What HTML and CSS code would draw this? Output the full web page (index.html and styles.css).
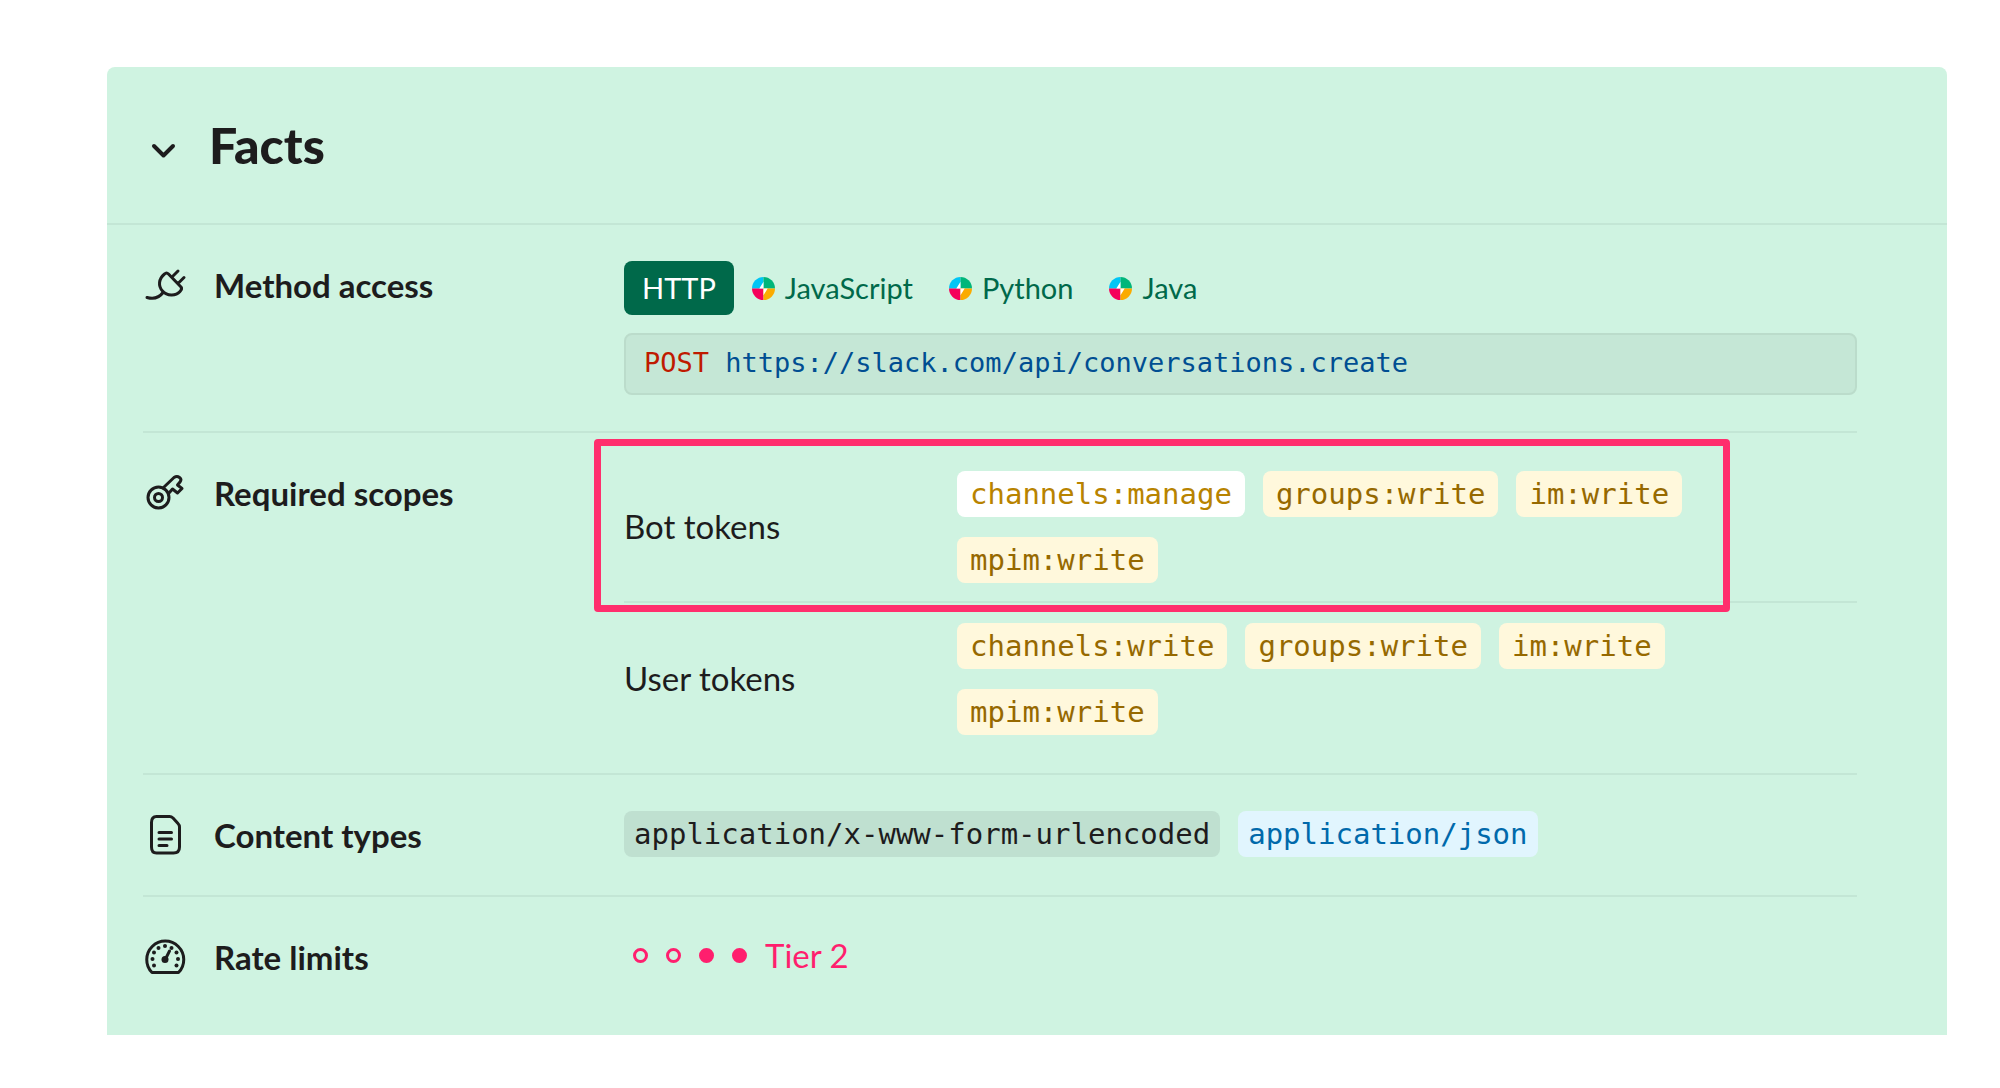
FILE: index.html
```html
<!DOCTYPE html>
<html lang="en">
<head>
<meta charset="utf-8">
<meta name="viewport" content="width=device-width, initial-scale=1">
<title>Facts</title>
<link rel="stylesheet" href="styles.css">
</head>
<body>
<svg class="defs" aria-hidden="true">
  <symbol id="sdk" viewBox="0 0 22 22">
    <path d="M11 11V0A11 11 0 0 0 0 11z" fill="#00c5f5"/>
    <path d="M11 11V0A11 11 0 0 1 22 11z" fill="#00b67a"/>
    <path d="M11 11V22A11 11 0 0 1 0 11z" fill="#f5005a"/>
    <path d="M11 11V22A11 11 0 0 0 22 11z" fill="#fbab00"/>
    <path d="M11 4.500V11H15L11 17.500V11H7z" fill="#fff"/>
  </symbol>
</svg>
<main class="panel">
  <header class="panel-header">
    <button class="toggle" type="button" aria-expanded="true" aria-label="Collapse Facts">
      <svg class="icon" viewBox="0 0 44 44"><path d="M11 17l9.500 9.500L30 17" stroke-width="4"/></svg>
    </button>
    <h1 class="title">Facts</h1>
  </header>
  <div class="facts">
    <section class="fact">
      <h2 class="fact-name">
        <svg class="icon" viewBox="0 0 44 44"><path d="M4 34.500c7 2 12 .5 16-5M25.500 11l12.500 13M29 14l6-6M35 20.500l6-6M25.500 11q-2-2-4 0c-6 5-6.500 12-2 17s13 5.500 17.500.5q2.500-2.500 1-4.500"/></svg>
        Method access
      </h2>
      <div class="fact-body method">
        <div class="tabs">
          <button class="tab tab-active" type="button">HTTP</button>
          <button class="tab" type="button"><svg class="sdk"><use href="#sdk"/></svg>JavaScript</button>
          <button class="tab" type="button"><svg class="sdk"><use href="#sdk"/></svg>Python</button>
          <button class="tab" type="button"><svg class="sdk"><use href="#sdk"/></svg>Java</button>
        </div>
        <code class="endpoint"><span class="verb">POST</span> https://slack.com/api/conversations.create</code>
      </div>
    </section>
    <section class="fact">
      <h2 class="fact-name">
        <svg class="icon" viewBox="0 0 44 44"><circle cx="15.500" cy="26.500" r="10.500"/><circle cx="15.500" cy="26.500" r="4"/><path d="M20 17L31 6.500q3-2 5.500 0t.5 4.500l-2.500 3 4.500 3.500-4.500 4.500-5-4-3.500 4"/></svg>
        Required scopes
      </h2>
      <div class="scopes">
        <div class="scope-row">
          <h3 class="scope-name">Bot tokens</h3>
          <div class="badges">
            <a class="scope scope-hover" href="#channels-manage">channels:manage</a>
            <a class="scope" href="#groups-write">groups:write</a>
            <a class="scope" href="#im-write">im:write</a>
            <a class="scope" href="#mpim-write">mpim:write</a>
          </div>
          <div class="highlight"></div>
        </div>
        <div class="scope-row">
          <h3 class="scope-name">User tokens</h3>
          <div class="badges">
            <a class="scope" href="#channels-write">channels:write</a>
            <a class="scope" href="#groups-write">groups:write</a>
            <a class="scope" href="#im-write">im:write</a>
            <a class="scope" href="#mpim-write">mpim:write</a>
          </div>
        </div>
      </div>
    </section>
    <section class="fact">
      <h2 class="fact-name">
        <svg class="icon" viewBox="0 0 44 44"><path d="M13.500 3.500h13q2 0 3.500 1.500l5 5.500q1.500 1.500 1.500 3.500v20q0 6-6 6h-17q-5 0-5-6v-24.500q0-6 5-6zM16 19.500h12.500M16 26h12.500M16 32.500h8"/></svg>
        Content types
      </h2>
      <div class="fact-body types">
        <code class="type">application/x-www-form-urlencoded</code>
        <a class="type type-link" href="#json">application/json</a>
      </div>
    </section>
    <section class="fact">
      <h2 class="fact-name">
        <svg class="icon" viewBox="0 0 44 44"><g transform="translate(0 1)"><path d="M9 36.500a18.500 18.500 0 1 1 26.500 0z"/><g class="solid"><circle cx="11" cy="29.500" r="2"/><circle cx="9.500" cy="23" r="2"/><circle cx="11" cy="16.500" r="2"/><circle cx="15.500" cy="12" r="2"/><circle cx="22" cy="10" r="2"/><circle cx="28.500" cy="12" r="2"/><circle cx="33.500" cy="16.500" r="2"/><circle cx="35" cy="23" r="2"/><circle cx="33.500" cy="29.500" r="2"/><circle cx="22" cy="23.500" r="3.500"/></g><path d="M22.500 23l4-8"/></g></svg>
        Rate limits
      </h2>
      <div class="fact-body">
        <a class="tier" href="#tier-2">
          <span class="dot"></span><span class="dot"></span><span class="dot dot-on"></span><span class="dot dot-on"></span>
          <span>Tier 2</span>
        </a>
      </div>
    </section>
  </div>
</main>
</body>
</html>
```
FILE: styles.css
```css
* { box-sizing: border-box; }

body {
  margin: 0;
  padding: 67px 53px 53px 107px;
  background: #fff;
  color: #1d1c1d;
  font-family: Lato, "Liberation Sans", sans-serif;
  font-size: 33px;
}

h1, h2, h3 { margin: 0; }
a { text-decoration: none; }
button { border: 0; background: none; font: inherit; color: inherit; }

.defs { display: none; }

.panel {
  background: #cff3e1;
  border-radius: 8px 8px 0 0;
  padding-bottom: 56px;
}

.panel-header {
  display: flex;
  align-items: center;
  height: 158px;
  padding: 0 36px;
  border-bottom: 2px solid #c3e6d5;
}

.toggle {
  display: flex;
  padding: 12px 0 0;
  margin-right: 22px;
}

.title {
  font-size: 50px;
  line-height: 60px;
  font-weight: 900;
}

.icon {
  flex: none;
  width: 44px;
  height: 44px;
  overflow: visible;
  fill: none;
  stroke: #1d1c1d;
  stroke-width: 3;
  stroke-linecap: round;
  stroke-linejoin: round;
}

.solid {
  fill: #1d1c1d;
  stroke: none;
}

.facts { margin: 0 90px 0 36px; }

.fact {
  display: grid;
  grid-template-columns: 481px 1fr;
}

.fact + .fact { border-top: 2px solid #c3e6d5; }

.fact-name {
  display: flex;
  gap: 27px;
  padding-top: 38px;
  font-size: 33px;
  line-height: 44px;
  font-weight: 700;
}

.fact-body { padding: 36px 0; }
.fact:last-child .fact-body { padding-bottom: 0; }

.method {
  display: flex;
  flex-direction: column;
  gap: 18px;
}

.tabs { display: flex; }

.tab {
  display: flex;
  align-items: center;
  gap: 10px;
  padding: 0 18px;
  border-radius: 8px;
  color: #00694a;
  font-size: 29px;
  line-height: 54px;
}

.tab-active {
  background: #00694a;
  color: #fff;
}

.sdk {
  width: 23px;
  height: 23px;
}

.endpoint, .scope, .type {
  font-family: "DejaVu Sans Mono", monospace;
}

.endpoint {
  padding: 0 18px 2px;
  border: 2px solid #bbdccb;
  border-radius: 8px;
  background: #c5e7d6;
  color: #004e92;
  font-size: 27px;
  line-height: 56px;
}

.verb { color: #bf1a00; }

.scopes { padding-bottom: 20px; }

.scope-row {
  position: relative;
  display: grid;
  grid-template-columns: 333px 1fr;
  align-items: center;
  padding: 20px 0 18px;
}

.scope-row:first-child { padding-top: 38px; }
.scope-row + .scope-row { border-top: 2px solid #c3e6d5; }

.scope-name {
  padding-bottom: 2px;
  font-size: 33px;
  line-height: 40px;
  font-weight: 400;
}

.badges {
  display: flex;
  flex-wrap: wrap;
  gap: 20px 18px;
}

.scope {
  padding: 0 13px;
  border-radius: 8px;
  background: #fff8dc;
  color: #966900;
  font-size: 29px;
  line-height: 46px;
}

.scope-hover {
  background: #fff;
  color: #b88300;
}

.highlight {
  position: absolute;
  z-index: 1;
  inset: 6px 127px -11px -30px;
  border: 7px solid #ff2e6d;
  border-radius: 4px;
  pointer-events: none;
}

.types {
  display: flex;
  align-items: flex-start;
  gap: 18px;
}

.type {
  padding: 0 10px;
  margin-bottom: 2px;
  border-radius: 8px;
  background: #bfe0d0;
  font-size: 29px;
  line-height: 46px;
}

.type-link {
  background: #e1f5fe;
  color: #0069ab;
}

.tier {
  display: flex;
  align-items: center;
  gap: 18px;
  padding-left: 9px;
  color: #ff1f6e;
  line-height: 45px;
}

.dot {
  width: 15px;
  height: 15px;
  border: 3px solid #ff1f6e;
  border-radius: 50%;
}

.dot-on { background: #ff1f6e; }
```
